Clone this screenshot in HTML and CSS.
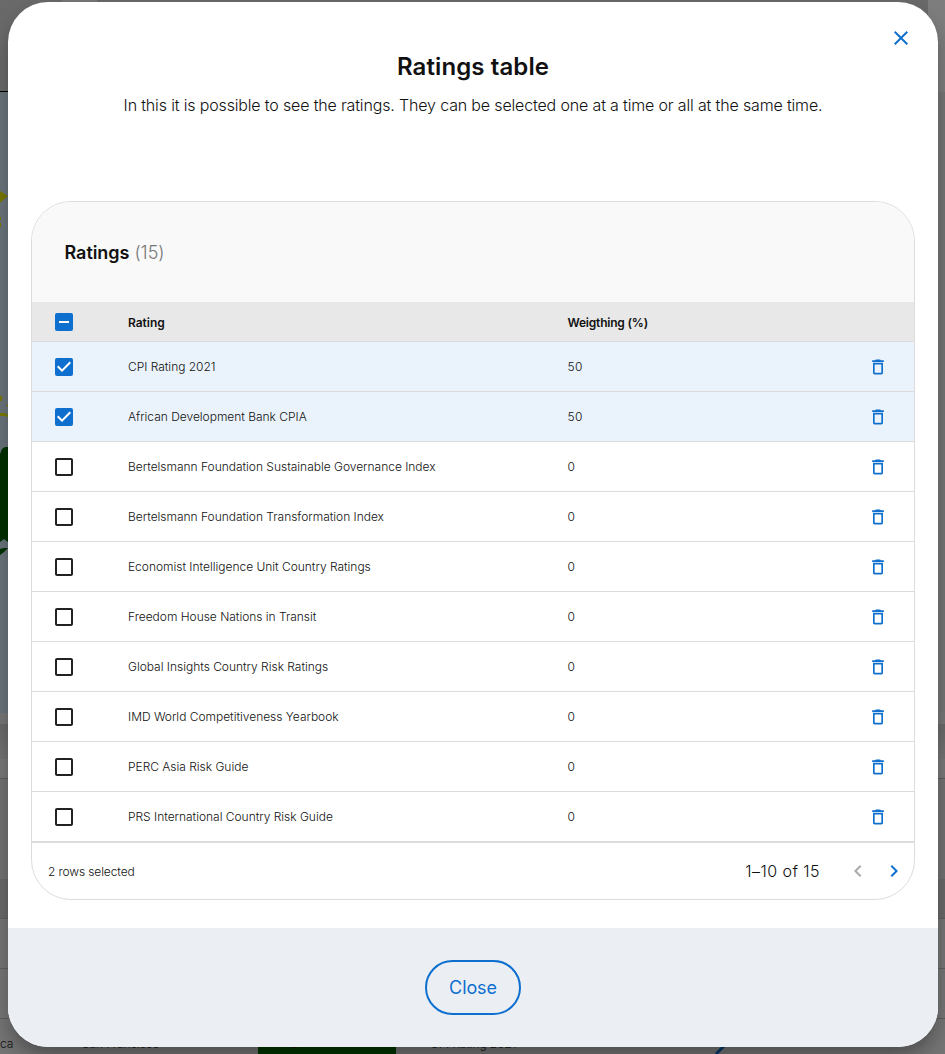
FILE: index.html
```
<!DOCTYPE html>
<html lang="en">
<head>
<meta charset="utf-8">
<title>Ratings table</title>
<link rel="stylesheet" href="styles.css">
</head>
<body>
<svg class="sprite" width="0" height="0" aria-hidden="true">
  <symbol id="off" viewBox="0 0 24 24"><path d="M19 5v14H5V5h14m0-2H5c-1.1 0-2 .9-2 2v14c0 1.1.9 2 2 2h14c1.1 0 2-.9 2-2V5c0-1.1-.9-2-2-2z"/></symbol>
  <symbol id="on" viewBox="0 0 24 24"><rect x="3" y="3" width="18" height="18" rx="2"/><path class="mark" d="M10 17l-5-5 1.41-1.41L10 14.17l7.59-7.59L19 8z"/></symbol>
  <symbol id="some" viewBox="0 0 24 24"><rect x="3" y="3" width="18" height="18" rx="2"/><path class="mark" d="M7 11h10v2H7z"/></symbol>
  <symbol id="bin" viewBox="0 0 24 24"><path d="M6 19c0 1.1.9 2 2 2h8c1.1 0 2-.9 2-2V7H6v12zM8 9h8v10H8V9zm7.5-5l-1-1h-5l-1 1H5v2h14V4z"/></symbol>
</svg>

<div class="page">
  <div class="topbar"><span class="tab"></span><span class="edge"></span></div>
  <div class="map">
    <svg width="10" height="621" viewBox="0 92 10 621">
      <path fill="#7a7a00" d="M0 191l3 2 5 3-6 5-2 2zM0 217h1v3H0zM0 223h1v4H0zM0 396h2v5H0zM0 413h5l3 2v2l-3-1H0zM7 404l1 1v2l-1-1z"/>
      <path fill="#003200" d="M8 447H5l-3 2-2 5v88l4-3 4 3zM0 549l4-1h4l-4 4-4 3z"/>
    </svg>
  </div>
  <div class="band b1"></div>
  <div class="band b2"></div>
  <div class="band b3"></div>
  <div class="band b4"></div>
  <div class="band b5"></div>
  <div class="band b6"></div>
  <div class="band b7"><span class="c1">ca</span><span class="c2">San Francisco</span><span class="c3">37</span><span class="c4">CPI Rating 2021</span><span class="c5"><svg width="26" height="26" viewBox="0 0 26 26"><path d="M9 20L18 11" stroke="#083a6b" stroke-width="3"/></svg></span></div>
</div>

<div class="modal">
  <svg class="close-x" width="24" height="24" viewBox="0 0 24 24"><path d="M19 6.41L17.59 5 12 10.59 6.41 5 5 6.41 10.59 12 5 17.59 6.41 19 12 13.41 17.59 19 19 17.59 13.41 12z"/></svg>
  <div class="content">
    <h1>Ratings table</h1>
    <p class="intro">In this it is possible to see the ratings. They can be selected one at a time or all at the same time.</p>
    <div class="card">
      <div class="card-title"><b>Ratings</b> <span>(15)</span></div>
      <div class="row head"><svg class="box blue"><use href="#some"/></svg><span class="name">Rating</span><span class="weight">Weigthing (%)</span></div>
      <div class="row picked"><svg class="box blue"><use href="#on"/></svg><span class="name">CPI Rating 2021</span><span class="weight">50</span><svg class="bin"><use href="#bin"/></svg></div>
      <div class="row picked"><svg class="box blue"><use href="#on"/></svg><span class="name">African Development Bank CPIA</span><span class="weight">50</span><svg class="bin"><use href="#bin"/></svg></div>
      <div class="row"><svg class="box"><use href="#off"/></svg><span class="name">Bertelsmann Foundation Sustainable Governance Index</span><span class="weight">0</span><svg class="bin"><use href="#bin"/></svg></div>
      <div class="row"><svg class="box"><use href="#off"/></svg><span class="name">Bertelsmann Foundation Transformation Index</span><span class="weight">0</span><svg class="bin"><use href="#bin"/></svg></div>
      <div class="row"><svg class="box"><use href="#off"/></svg><span class="name">Economist Intelligence Unit Country Ratings</span><span class="weight">0</span><svg class="bin"><use href="#bin"/></svg></div>
      <div class="row"><svg class="box"><use href="#off"/></svg><span class="name">Freedom House Nations in Transit</span><span class="weight">0</span><svg class="bin"><use href="#bin"/></svg></div>
      <div class="row"><svg class="box"><use href="#off"/></svg><span class="name">Global Insights Country Risk Ratings</span><span class="weight">0</span><svg class="bin"><use href="#bin"/></svg></div>
      <div class="row"><svg class="box"><use href="#off"/></svg><span class="name">IMD World Competitiveness Yearbook</span><span class="weight">0</span><svg class="bin"><use href="#bin"/></svg></div>
      <div class="row"><svg class="box"><use href="#off"/></svg><span class="name">PERC Asia Risk Guide</span><span class="weight">0</span><svg class="bin"><use href="#bin"/></svg></div>
      <div class="row"><svg class="box"><use href="#off"/></svg><span class="name">PRS International Country Risk Guide</span><span class="weight">0</span><svg class="bin"><use href="#bin"/></svg></div>
      <div class="pager">
        <span class="selected">2 rows selected</span>
        <span class="range">1–10 of 15</span>
        <svg class="prev" width="24" height="24" viewBox="0 0 24 24"><path d="M15.41 7.41L14 6l-6 6 6 6 1.41-1.41L10.83 12z"/></svg>
        <svg class="next" width="24" height="24" viewBox="0 0 24 24"><path d="M10 6L8.59 7.41 13.17 12l-4.58 4.59L10 18l6-6z"/></svg>
      </div>
    </div>
  </div>
  <div class="actions"><button class="close">Close</button></div>
</div>
</body>
</html>
```
FILE: styles.css
```
* { box-sizing: border-box; }
body { margin: 0; height: 1054px; overflow: hidden; font-family: Inter, "Liberation Sans", sans-serif; font-weight: 300; color: #111; }
.sprite { position: absolute; }
.mark { fill: #fff; }

.page { height: 1054px; background: #707070; overflow: hidden; }
.topbar { display: flex; height: 92px; background: linear-gradient(90deg, #000 0 928px, #7a7a7a 928px) bottom / 100% 1px no-repeat #6a6a6a; }
.tab { width: 35px; height: 10px; margin-left: 62px; background: #777; }
.edge { width: 17px; margin-left: auto; background: #7e7e7e; }
.map { height: 621px; background: linear-gradient(90deg, #6a757c 0 8px, #767676 300px); }
.map svg { display: block; }
.b1 { height: 11px; background: #787878; }
.b2 { height: 35px; background: linear-gradient(#6a6a6a, #757575); }
.b3 { height: 20px; background: #797979; border-bottom: 1px solid #606060; }
.b4 { height: 100px; background: #737373; }
.b5 { height: 40px; background: #6a6a6a; border-bottom: 1px solid #606060; }
.b6 { height: 50px; background: #767676; border-bottom: 1px solid #606060; }
.b7 { display: flex; height: 86px; padding-top: 50px; font-size: 12px; line-height: 50px; letter-spacing: -.1px; background: linear-gradient(#767676 49px, #606060 49px 50px, #767676 50px); }
.b7 span { flex: none; height: 50px; }
.c1 { width: 82px; }
.c2 { width: 176px; }
.c3 { width: 138px; padding-left: 32px; background: #003600; }
.c4 { width: 311px; padding-left: 34px; }
.c5 { width: 26px; padding-top: 15px; line-height: 0; }

.modal { position: absolute; left: 8px; top: 2px; display: flex; flex-direction: column; width: 930px; height: 1045px; overflow: hidden; background: #fff; border-radius: 40px; box-shadow: 0 11px 15px -7px rgba(0,0,0,.2), 0 12px 24px 2px rgba(0,0,0,.2); }
.close-x { position: absolute; right: 25px; top: 24px; fill: #0f6fce; }
.content { flex: 1; padding: 49px 23px 0; }
h1 { margin: 0; font-size: 24px; line-height: 32px; font-weight: 600; letter-spacing: .1px; text-align: center; }
.intro { margin: 10px 0 84px; font-size: 16px; line-height: 24px; letter-spacing: -.155px; text-align: center; white-space: nowrap; }
.card { height: 699px; overflow: hidden; border: 1px solid #dcdcdc; border-radius: 40px; }
.card-title { height: 100px; padding-left: 32.5px; font-size: 18px; line-height: 101px; letter-spacing: -.05px; background: #f9f9f9; }
.card-title b { font-weight: 600; }
.card-title span { color: #777; }
.row { display: flex; align-items: center; height: 50px; border-bottom: 1px solid #dcdcdc; font-size: 12px; line-height: 20px; letter-spacing: -.02px; white-space: nowrap; }
.head { height: 40px; background: #e8e8e8; font-weight: 600; }
.head span { padding-top: 2px; }
.head .weight { letter-spacing: -.2px; }
.picked { background: #eaf3fb; }
.box { width: 24px; height: 24px; margin: 1px 52px 0 20px; fill: #222; flex: none; }
.blue { fill: #0f6fce; }
.name { width: 439.5px; }
.weight { width: 300px; letter-spacing: .3px; }
.bin { width: 20px; height: 20px; fill: #0f6fce; flex: none; }
.pager { display: flex; align-items: center; height: 57px; padding: 0 8px 0 16px; border-top: 1px solid #dcdcdc; }
.selected { flex: 1; font-size: 12px; letter-spacing: -.12px; }
.range { font-size: 16px; letter-spacing: .45px; }
.prev { margin-left: 26px; fill: #aaa; }
.next { margin-left: 12px; fill: #0f6fce; }
.actions { display: flex; align-items: center; justify-content: center; height: 119px; background: #ebeff4; }
.close { width: 96px; height: 55px; padding: 0; border: 2px solid #0f6fce; border-radius: 28px; background: none; color: #0f6fce; font: 400 18px Inter, "Liberation Sans", sans-serif; letter-spacing: -.1px; }
```
